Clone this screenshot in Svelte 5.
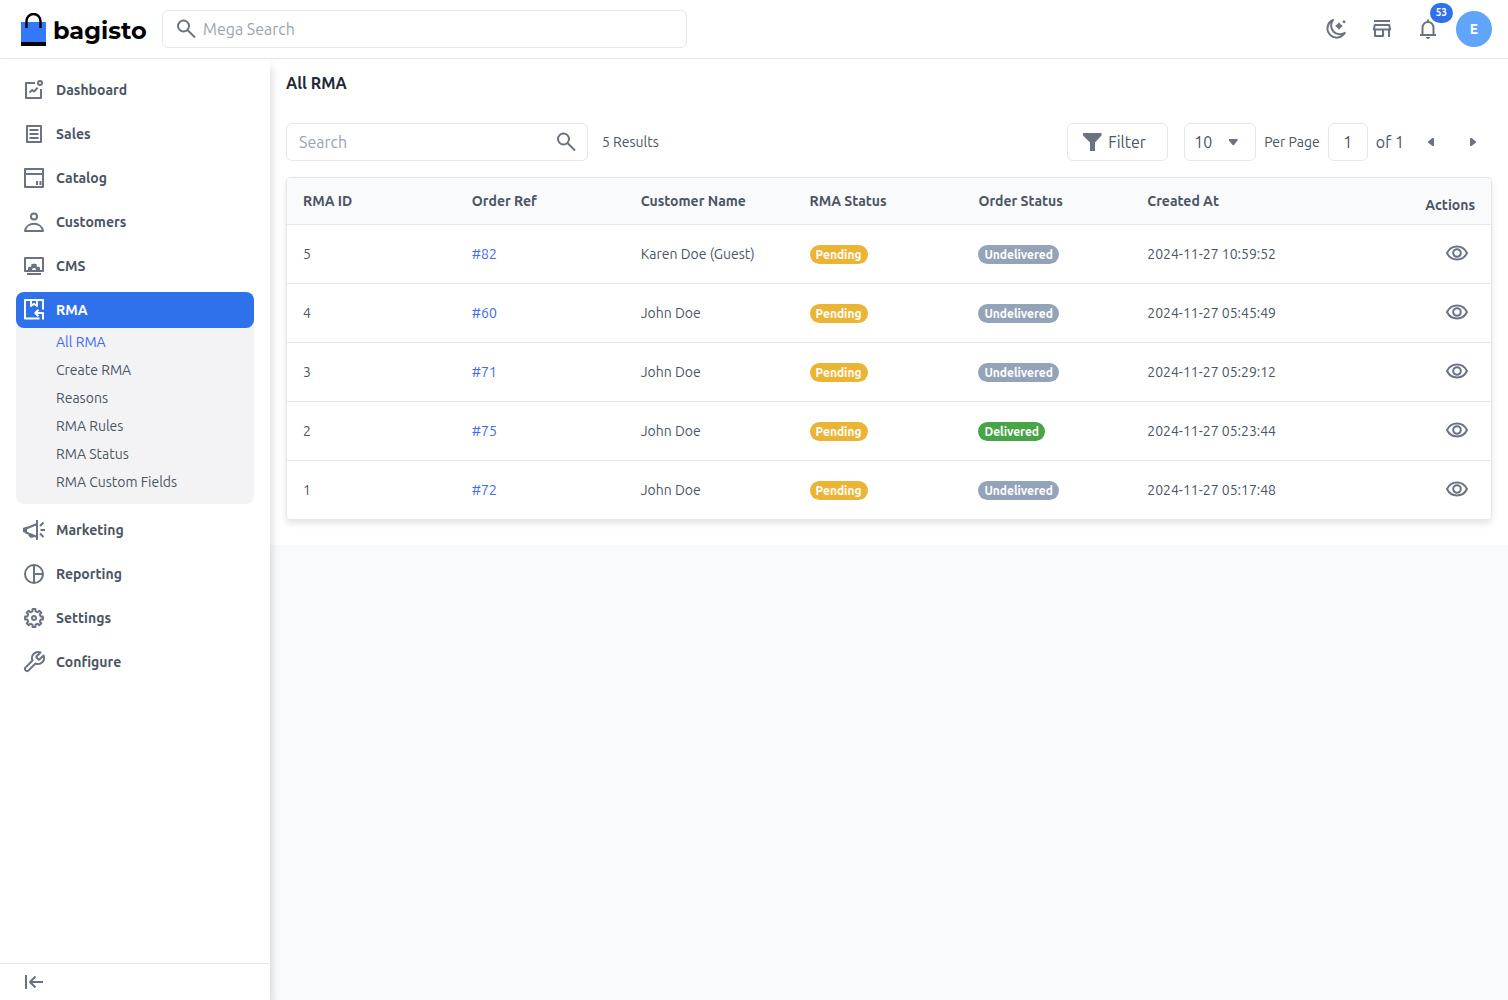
<script>
  /**
   * Admin "All RMA" listing: top bar, sidebar navigation and the data grid
   * with its search, filter and paging controls.
   */
  const ring = (cx, cy, r) =>
    `M${cx - r} ${cy}a${r} ${r} 0 1 0 ${2 * r} 0a${r} ${r} 0 1 0 ${-2 * r} 0`;

  /** Closed outline of an eight-toothed gear around 12,12. */
  function gear(outer, inner) {
    const points = [];
    for (let i = 0; i < 8; i++) {
      for (const [offset, r] of [[-13, inner], [-9, outer], [9, outer], [13, inner]]) {
        const a = ((i * 45 + offset) * Math.PI) / 180;
        points.push(`${(12 + r * Math.cos(a)).toFixed(2)} ${(12 + r * Math.sin(a)).toFixed(2)}`);
      }
    }
    return `M${points.join('L')}Z`;
  }

  const magnifier = `${ring(8.5, 9, 5.5)}M12.5 13l7.5 7.5`;
  const eye = `M2 11C4.2 6.5 7.5 4.5 12 4.5s7.8 2 10 6.5c-2.2 4.5-5.5 6.5-10 6.5S4.2 15.5 2 11z${ring(12, 11, 3.8)}`;

  const menu = [
    {
      label: 'Dashboard',
      icon: `M13 5H4v15h15v-9M7.5 14.5l2.7-2.6 1.8 1.6 3.6-3.8${ring(18, 5, 2)}`,
    },
    { label: 'Sales', icon: 'M5 4h14v16H5zM7.5 8h9M7.5 12h9M7.5 16h9' },
    { label: 'Catalog', icon: 'M3 3h18v18H3zM3 8h18M15 15v4M18.5 15v4' },
    {
      label: 'Customers',
      icon: `${ring(12, 6.5, 3)}M3 21c.8-4.4 4.5-7.2 9-7.2s8.2 2.8 9 7.2z`,
    },
    {
      label: 'CMS',
      icon: 'M3 4h18v13H3zM5 20h14',
      solid: 'M6 16v-2l1-1.5 1.5.5 1-1-.5-1.5 2-.8h2l2 .8-.5 1.5 1 1 1.5-.5 1 1.5v2h-4a2 2 0 0 0-4 0z',
    },
    {
      label: 'RMA',
      icon: 'M21 11.5V2H3v18.5h14.5M9 2v6l3-2.2L15 8V2M21 21.5V15h-7M16.5 11.8L13.3 15l3.2 3.2',
      children: ['All RMA', 'Create RMA', 'Reasons', 'RMA Rules', 'RMA Status', 'RMA Custom Fields'],
    },
    {
      label: 'Marketing',
      icon: 'M15 2v20M15 6L4 10.5v4L15 19M7 16c.5 3 3 3.5 4.5 2M18 8l3.5-3.5M18.5 12H23M18 15.5l3.5 3.5',
      solid: 'M1 10l4-1.5v7l-4-1.5z',
    },
    { label: 'Reporting', icon: `${ring(12, 12, 9)}M12 3v18M12 12h9` },
    { label: 'Settings', icon: `${gear(9, 6.8)}${ring(12, 12, 2)}` },
    {
      label: 'Configure',
      icon: 'M14.7 6.3a1 1 0 0 0 0 1.4l1.6 1.6a1 1 0 0 0 1.4 0l3.77-3.77a6 6 0 0 1-7.94 7.94l-6.91 6.91a2.12 2.12 0 0 1-3-3l6.91-6.91a6 6 0 0 1 7.94-7.94l-3.76 3.76z',
    },
  ];

  const columns = ['RMA ID', 'Order Ref', 'Customer Name', 'RMA Status', 'Order Status', 'Created At', 'Actions'];

  const records = [
    { id: 5, order: '#82', customer: 'Karen Doe (Guest)', status: 'Pending', orderStatus: 'Undelivered', createdAt: '2024-11-27 10:59:52' },
    { id: 4, order: '#60', customer: 'John Doe', status: 'Pending', orderStatus: 'Undelivered', createdAt: '2024-11-27 05:45:49' },
    { id: 3, order: '#71', customer: 'John Doe', status: 'Pending', orderStatus: 'Undelivered', createdAt: '2024-11-27 05:29:12' },
    { id: 2, order: '#75', customer: 'John Doe', status: 'Pending', orderStatus: 'Delivered', createdAt: '2024-11-27 05:23:44' },
    { id: 1, order: '#72', customer: 'John Doe', status: 'Pending', orderStatus: 'Undelivered', createdAt: '2024-11-27 05:17:48' },
  ];

  let activeMenu = $state('RMA');
  let activePage = $state('All RMA');
  let perPage = $state('10');
  let page = $state('1');
</script>

{#snippet icon(lines, solid = '')}
  <svg class="icon" viewBox="0 0 24 24" aria-hidden="true">
    <path d={lines} fill="none" stroke="currentColor" stroke-width="2" stroke-linejoin="round" />
    {#if solid}<path d={solid} fill="currentColor" />{/if}
  </svg>
{/snippet}

<div class="page">
  <header class="topbar">
    <a class="logo" href="#dashboard">
      <svg viewBox="0 0 26 36" aria-hidden="true">
        <path d="M0 9h25v21H0z" fill="#3479fb" />
        <path d="M0 29h25v4H0z" fill="#000" />
        <path d="M5.5 15V8a7 7 0 0 1 14 0v7" fill="none" stroke="#000" stroke-width="2.4" />
      </svg>
      <span>bagisto</span>
    </a>

    <div class="mega field">
      {@render icon(magnifier)}
      <input type="text" placeholder="Mega Search" aria-label="Mega Search" />
    </div>

    <div class="tools">
      <button type="button" class="tool" aria-label="Dark mode">
        <svg class="icon" viewBox="0 0 24 24" aria-hidden="true">
          <path d="M9 3A9.2 9.2 0 1 0 20.8 15.8 8.8 8.8 0 0 1 9 3z" fill="none" stroke="currentColor" stroke-width="2" stroke-linejoin="round" />
          <path d="M15 5.2l1.7 2.1 2.1 1.7-2.1 1.7-1.7 2.1-1.7-2.1-2.1-1.7 2.1-1.7zM20 3l1.8 1.8L20 6.6 18.2 4.8z" fill="currentColor" />
        </svg>
      </button>
      <button type="button" class="tool" aria-label="Visit shop">
        {@render icon('M4 4h16M4.8 8h14.4l1 4.5H3.8zM5 12.5V19h8v-6.5M19 12.5V20')}
      </button>
      <button type="button" class="tool" aria-label="Notifications">
        {@render icon('M6.5 18v-7.5a5.5 5.5 0 0 1 11 0V18M4 18h16M12 5V2.5', 'M10 20h4a2 2 0 0 1-4 0z')}
        <span class="count">53</span>
      </button>
      <button type="button" class="avatar">E</button>
    </div>
  </header>

  <div class="body">
    <aside class="sidebar">
      <nav>
        {#each menu as item (item.label)}
          <div class="group" class:open={item.children && item.label === activeMenu}>
            <a
              class="item"
              class:active={item.label === activeMenu}
              href="#{item.label.toLowerCase()}"
              onclick={() => (activeMenu = item.label)}
            >
              {@render icon(item.icon, item.solid)}
              <span>{item.label}</span>
            </a>
            {#if item.children && item.label === activeMenu}
              <div class="children">
                {#each item.children as child (child)}
                  <a
                    class:current={child === activePage}
                    href="#rma"
                    onclick={() => (activePage = child)}
                  >{child}</a>
                {/each}
              </div>
            {/if}
          </div>
        {/each}
      </nav>
      <button type="button" class="collapse" aria-label="Collapse menu">
        {@render icon('M4 5v14M21 12H8M13.5 6.5L8 12l5.5 5.5')}
      </button>
    </aside>

    <main>
      <h1>All RMA</h1>

      <div class="toolbar">
        <div class="search field">
          <input type="text" placeholder="Search" aria-label="Search" />
          {@render icon(magnifier)}
        </div>
        <span class="small">5 Results</span>

        <div class="paging">
          <button type="button" class="filter field">
            <svg class="icon" viewBox="0 0 24 24" aria-hidden="true">
              <path d="M3 3h18.5v2.5L15 12.5V21h-5v-8.5L3 5.5z" fill="currentColor" />
            </svg>
            Filter
          </button>
          <div class="per-page">
            <select class="field" id="per-page" bind:value={perPage}>
              <option>10</option>
              <option>20</option>
              <option>30</option>
              <option>40</option>
              <option>50</option>
            </select>
            <svg class="icon caret" viewBox="0 0 24 24" aria-hidden="true">
              <path d="M8 9h8.5v1.5L13 15h-1.5L8 10.5z" fill="currentColor" />
            </svg>
          </div>
          <label class="small" for="per-page">Per Page</label>
          <input class="page-no field" type="text" aria-label="Page" bind:value={page} />
          <span class="total">of 1</span>
          <div class="steps">
            <button type="button" aria-label="Previous page">
              <svg class="icon" viewBox="0 0 24 24" aria-hidden="true">
                <path d="M15 8v8h-1.5L9 12.5v-1L13.5 8z" fill="currentColor" />
              </svg>
            </button>
            <button type="button" aria-label="Next page">
              <svg class="icon" viewBox="0 0 24 24" aria-hidden="true">
                <path d="M9 8v8h1.5l4.5-3.5v-1L10.5 8z" fill="currentColor" />
              </svg>
            </button>
          </div>
        </div>
      </div>

      <table>
        <thead>
          <tr>
            {#each columns as column (column)}
              <th scope="col">{column}</th>
            {/each}
          </tr>
        </thead>
        <tbody>
          {#each records as record (record.id)}
            <tr>
              <td>{record.id}</td>
              <td><a href="#order">{record.order}</a></td>
              <td>{record.customer}</td>
              <td><span class="badge">{record.status}</span></td>
              <td>
                <span
                  class="badge"
                  class:muted={record.orderStatus === 'Undelivered'}
                  class:done={record.orderStatus === 'Delivered'}
                >{record.orderStatus}</span>
              </td>
              <td>{record.createdAt}</td>
              <td>
                <button type="button" class="tool" aria-label="View RMA {record.id}">
                  {@render icon(eye)}
                </button>
              </td>
            </tr>
          {/each}
        </tbody>
      </table>
    </main>
  </div>
</div>

<style>
  :global(body) {
    background: #f9fafc;
  }

  .page {
    --line: #e5e7eb;
    --text: #4b5563;
    --icon: #6b7280;
    --blue: #2f71eb;
    min-height: 100vh;
    display: flex;
    flex-direction: column;
    font-family: Ubuntu, 'Open Sans', 'Noto Sans', sans-serif;
    font-size: 14px;
    line-height: 20px;
    color: var(--text);
  }
  .page *, .page { box-sizing: border-box; }

  a { color: inherit; text-decoration: none; }

  button, input, select {
    margin: 0;
    padding: 0;
    border: 0;
    background: transparent;
    font: inherit;
    color: inherit;
  }
  button, select { cursor: pointer; }
  input { min-width: 0; }
  input:focus { outline: none; }
  input::placeholder { color: #9ca3af; opacity: 1; }

  .icon {
    display: block;
    flex-shrink: 0;
    width: 24px;
    height: 24px;
    color: var(--icon);
  }

  .field {
    height: 38px;
    border: 1px solid var(--line);
    border-radius: 6px;
    background: #fff;
    font-size: 16px;
  }

  /* Top bar */

  .topbar {
    display: flex;
    align-items: center;
    height: 59px;
    padding: 0 16px 0 21px;
    background: #fff;
    border-bottom: 1px solid var(--line);
  }

  .logo {
    display: flex;
    align-items: center;
    gap: 6px;
    width: 141px;
    padding-top: 4px;
    color: #000;
    font-family: Montserrat, Inter, sans-serif;
    font-size: 24px;
    font-weight: 700;
    line-height: 36px;
  }
  .logo svg { width: 26px; height: 36px; flex-shrink: 0; }

  .mega {
    display: flex;
    align-items: center;
    gap: 4px;
    width: 525px;
    padding: 0 12px;
  }
  .mega input { flex: 1; }

  .tools {
    display: flex;
    gap: 10px;
    margin-left: auto;
  }
  .tool {
    position: relative;
    display: grid;
    place-items: center;
    width: 36px;
    height: 36px;
  }
  .count {
    position: absolute;
    top: -8px;
    right: -7px;
    padding: 2px 6px;
    border-radius: 10px;
    background: var(--blue);
    color: #fff;
    font-size: 10px;
    font-weight: 700;
    line-height: 16px;
  }
  .avatar {
    width: 36px;
    height: 36px;
    border-radius: 50%;
    background: #60a5fa;
    color: #fff;
    font-weight: 700;
  }

  /* Sidebar */

  .body {
    flex: 1;
    display: grid;
    grid-template-columns: 270px minmax(0, 1fr);
    align-items: start;
  }

  .sidebar {
    position: relative;
    z-index: 1;
    align-self: stretch;
    display: flex;
    flex-direction: column;
    background: #fff;
    box-shadow: 0 8px 10px rgba(0, 0, 0, 0.2);
  }
  nav {
    flex: 1;
    display: flex;
    flex-direction: column;
    gap: 8px;
    padding: 13px 16px;
  }
  .group { border-radius: 8px; }
  .group.open { background: #f3f3f6; }
  .item {
    display: flex;
    align-items: center;
    gap: 10px;
    height: 36px;
    padding: 0 6px;
    border-radius: 8px;
    font-weight: 700;
  }
  .item.active { background: var(--blue); color: #fff; }
  .item.active :global(.icon) { color: #fff; }
  .children {
    display: flex;
    flex-direction: column;
    padding: 0 0 8px 40px;
  }
  .children a { line-height: 28px; }
  .children .current { color: #4169ee; }
  .collapse {
    height: 37px;
    padding: 0 22px;
    border-top: 1px solid var(--line);
  }

  /* Listing */

  main {
    padding: 12px 16px 25px;
    background: #fff;
  }
  h1 {
    margin: 0 0 28px;
    color: #1f2937;
    font-size: 16px;
    font-weight: 700;
    line-height: 24px;
  }

  .toolbar {
    display: flex;
    align-items: center;
    gap: 14px;
    margin-bottom: 16px;
  }
  .search {
    display: flex;
    align-items: center;
    width: 302px;
    padding: 0 8px 0 12px;
  }
  .search input { flex: 1; }
  .small { font-size: 14px; }

  .paging {
    display: flex;
    align-items: center;
    gap: 8px;
    margin-left: auto;
  }
  .filter {
    display: flex;
    align-items: center;
    gap: 4px;
    width: 101px;
    margin-right: 8px;
    padding: 0 12px;
  }
  .per-page { display: grid; align-items: center; }
  .per-page > :global(*) { grid-area: 1 / 1; }
  select {
    appearance: none;
    width: 72px;
    padding: 0 9px;
  }
  .caret { justify-self: end; margin-right: 11px; pointer-events: none; }
  .page-no { width: 40px; text-align: center; }
  .total { font-size: 16px; }
  .steps { display: flex; gap: 4px; }
  .steps button {
    display: grid;
    place-items: center;
    width: 38px;
    height: 38px;
  }

  table {
    display: block;
    border: 1px solid var(--line);
    border-radius: 4px;
    box-shadow: 0 4px 6px rgba(0, 0, 0, 0.1);
    overflow: hidden;
  }
  thead, tbody { display: block; }
  tr {
    display: grid;
    grid-template-columns: repeat(7, minmax(0, 1fr));
    gap: 10px;
    align-items: center;
    padding: 9px 16px;
    border-bottom: 1px solid var(--line);
  }
  thead tr { min-height: 47px; background: #f9fafc; }
  tbody tr { min-height: 59px; }
  tbody tr:last-child { min-height: 58px; border-bottom: 0; }
  th, td { padding: 0; text-align: left; }
  th { font-weight: 700; }
  th:last-child { align-self: end; text-align: right; }
  td:last-child { display: flex; justify-content: flex-end; }
  td a { color: #4169ee; }

  .badge {
    display: block;
    width: fit-content;
    padding: 0 6px;
    border-radius: 10px;
    background: #ebb434;
    color: #fff;
    font-size: 12px;
    font-weight: 700;
    line-height: 19px;
  }
  .badge.muted { background: #94a3b8; }
  .badge.done { background: #47a447; }
</style>
